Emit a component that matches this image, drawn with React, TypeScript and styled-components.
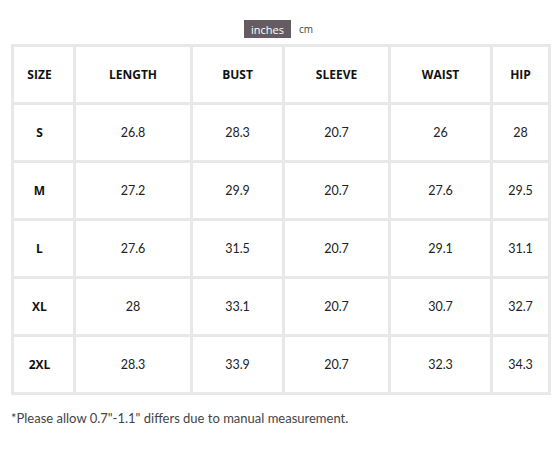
import styled, { createGlobalStyle } from 'styled-components';

const GlobalStyle = createGlobalStyle`
  body {
    margin: 0;
    background: #fff;
    font-family: Lato, "Noto Sans", sans-serif;
  }
`;

const Page = styled.div`
  width: 558px;
  padding: 20px 0 0 11px;
  box-sizing: border-box;
`;

const UnitSwitch = styled.div`
  display: flex;
  align-items: center;
  gap: 8px;
  margin-left: 233px;
  height: 18px;
`;

const UnitButton = styled.span<{ $active?: boolean }>`
  display: inline-flex;
  align-items: center;
  justify-content: center;
  height: 18px;
  padding: 0 ${(p) => (p.$active ? '7px' : '0')};
  background: ${(p) => (p.$active ? '#655b63' : 'transparent')};
  color: ${(p) => (p.$active ? '#fff' : '#444')};
  font-family: "Open Sans", sans-serif;
  font-size: ${(p) => (p.$active ? '11px' : '10px')};
`;

const Table = styled.table`
  margin-top: 6px;
  width: 537px;
  table-layout: fixed;
  border-collapse: collapse;
  border: 3px solid #e8e8e8;
`;

const Cell = styled.td`
  height: 55px;
  border: 3px solid #e8e8e8;
  text-align: center;
  vertical-align: middle;
  padding: 0;
  font-size: 12.5px;
  color: #222;
`;

const HeadCell = styled(Cell).attrs({ as: 'th' })`
  font-family: "Open Sans", sans-serif;
  font-weight: 700;
  font-size: 12px;
  color: #111;
`;

const SizeCell = styled(HeadCell)`
  padding-right: 8px;
`;

const Note = styled.p`
  margin: 15px 0 0;
  font-size: 13px;
  color: #444;
`;

const widths = [62, 117, 92, 106, 102, 58];
const headers = ['SIZE', 'LENGTH', 'BUST', 'SLEEVE', 'WAIST', 'HIP'];
const rows = [
  ['S', '26.8', '28.3', '20.7', '26', '28'],
  ['M', '27.2', '29.9', '20.7', '27.6', '29.5'],
  ['L', '27.6', '31.5', '20.7', '29.1', '31.1'],
  ['XL', '28', '33.1', '20.7', '30.7', '32.7'],
  ['2XL', '28.3', '33.9', '20.7', '32.3', '34.3'],
];

export default function App() {
  return (
    <>
      <GlobalStyle />
      <Page>
        <UnitSwitch>
          <UnitButton $active>inches</UnitButton>
          <UnitButton>cm</UnitButton>
        </UnitSwitch>
        <Table>
          <colgroup>
            {widths.map((w, i) => (
              <col key={i} style={{ width: w }} />
            ))}
          </colgroup>
          <thead>
            <tr>
              {headers.map((h, i) =>
                i === 0 ? <SizeCell key={h}>{h}</SizeCell> : <HeadCell key={h}>{h}</HeadCell>
              )}
            </tr>
          </thead>
          <tbody>
            {rows.map((r) => (
              <tr key={r[0]}>
                <SizeCell>{r[0]}</SizeCell>
                {r.slice(1).map((v, i) => (
                  <Cell key={i}>{v}</Cell>
                ))}
              </tr>
            ))}
          </tbody>
        </Table>
        <Note>*Please allow 0.7"-1.1" differs due to manual measurement.</Note>
      </Page>
    </>
  );
}
